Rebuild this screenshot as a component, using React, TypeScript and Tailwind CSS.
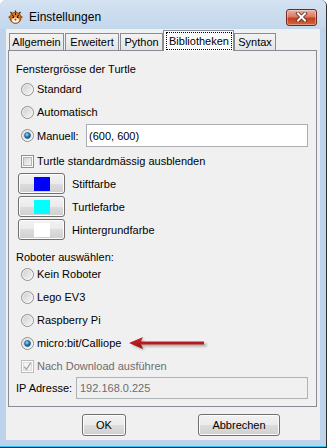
import React from "react";

function Radio({ checked }: { checked?: boolean }) {
  return (
    <svg width="13" height="13" viewBox="0 0 13 13" className="shrink-0">
      <defs>
        <linearGradient id="radFill" x1="0" y1="0" x2="1" y2="1">
          <stop offset="0" stopColor="#cbcbcb" />
          <stop offset="1" stopColor="#fafafa" />
        </linearGradient>
        <radialGradient id="radDot" cx="0.4" cy="0.35" r="0.7">
          <stop offset="0" stopColor="#a6e2ff" />
          <stop offset="0.45" stopColor="#2a8fd4" />
          <stop offset="1" stopColor="#0f3d66" />
        </radialGradient>
      </defs>
      <circle cx="6.5" cy="6.5" r="6" fill="url(#radFill)" stroke="#8f9090" />
      <circle cx="6.5" cy="6.5" r="4.9" fill="none" stroke="#f4f4f4" strokeWidth="0.8" />
      {checked && (
        <circle cx="6.5" cy="6.5" r="3" fill="url(#radDot)" stroke="#1c4e78" strokeWidth="0.6" />
      )}
    </svg>
  );
}

function Check({ checked, disabled }: { checked?: boolean; disabled?: boolean }) {
  return (
    <svg width="13" height="13" viewBox="0 0 13 13" className="shrink-0">
      <defs>
        <linearGradient id="chkFill" x1="0" y1="0" x2="1" y2="1">
          <stop offset="0" stopColor="#cfd2d7" />
          <stop offset="1" stopColor="#f8f8f8" />
        </linearGradient>
      </defs>
      <rect x="0.5" y="0.5" width="12" height="12" fill="#fdfdfd" stroke={disabled ? "#bcbcbc" : "#8e8f8f"} />
      <rect
        x="2.5"
        y="2.5"
        width="8"
        height="8"
        fill={disabled ? "#f4f4f4" : "url(#chkFill)"}
        stroke={disabled ? "#dcdcdc" : "#b2b6bc"}
      />
      {checked && (
        <path
          d="M3.2 6.8 L5.4 9.4 L9.8 2.8"
          fill="none"
          stroke={disabled ? "#a8a8a8" : "#1c4e78"}
          strokeWidth="1.4"
        />
      )}
    </svg>
  );
}

const btn =
  "rounded-[3px] border border-[#707070] bg-[linear-gradient(#f2f2f2_0%,#ebebeb_50%,#dddddd_50%,#cfcfcf_100%)] shadow-[inset_0_0_0_1px_#fcfcfc] flex items-center justify-center";

function ColorRow({ color, label, mt }: { color: string; label: string; mt: string }) {
  return (
    <div className={`flex items-center h-[21px] ${mt}`}>
      <div className={`${btn} ml-[2px] w-[47px] h-[21px]`}>
        <div className="w-[16px] h-[14px]" style={{ backgroundColor: color }} />
      </div>
      <span className="ml-[7px]">{label}</span>
    </div>
  );
}

function RadioRow({ label, checked, mt, children }: { label: string; checked?: boolean; mt: string; children?: React.ReactNode }) {
  return (
    <div className={`flex items-center h-[16px] ${mt}`}>
      <div className="ml-[5px]">
        <Radio checked={checked} />
      </div>
      <span className="ml-[3px] whitespace-nowrap">{label}</span>
      {children}
    </div>
  );
}

function Tab({ label, w, ml }: { label: string; w: string; ml?: string }) {
  return (
    <div
      className={`${w} ${ml ?? ""} h-[17px] border border-b-0 border-[#898c95] bg-[linear-gradient(#f3f3f3,#e4e4e4)] flex items-center justify-center`}
    >
      {label}
    </div>
  );
}

function TigerIcon() {
  return (
    <svg width="15" height="15" viewBox="0 0 15 15">
      <g stroke="#3a1e08" strokeWidth="1.2">
        <path d="M7.5 0.5 L7.5 3" />
        <path d="M2.5 2 L4.3 4" />
        <path d="M12.5 2 L10.7 4" />
        <path d="M0.5 7 L3 7.2" />
        <path d="M14.5 7 L12 7.2" />
      </g>
      <circle cx="7.5" cy="7.8" r="5.6" fill="#e0771c" stroke="#7a3a0a" strokeWidth="0.8" />
      <path d="M4 5 L6 6.5 M11 5 L9 6.5 M7.5 3 L7.5 5" stroke="#2a1606" strokeWidth="1" />
      <ellipse cx="7.5" cy="10" rx="3.4" ry="2.6" fill="#ffffff" />
      <circle cx="5.3" cy="7.3" r="0.9" fill="#000" />
      <circle cx="9.7" cy="7.3" r="0.9" fill="#000" />
      <circle cx="7.5" cy="9.6" r="1.1" fill="#c0281c" />
    </svg>
  );
}

export default function App() {
  return (
    <div className="w-[328px] h-[448px] bg-white overflow-hidden font-['Liberation_Sans',Arial,sans-serif] text-[11px] text-black leading-[16px]">
      <div className="w-[327px] h-[448px] flex flex-col bg-[#bcd3eb] border-r border-[#2d2d2d] rounded-t-[6px] overflow-hidden">
        {/* Title bar */}
        <div className="h-[29px] shrink-0 flex items-center pt-[5px] pl-[8px] pr-[9px] bg-[linear-gradient(#d4e2f1,#c3d7ec)]">
          <TigerIcon />
          <span className="ml-[6px] text-[12px]">Einstellungen</span>
          <div className="ml-auto w-[31px] h-[17px] rounded-[3px] border border-[#6e2a20] bg-[linear-gradient(#eeb0a2_0%,#da7a62_45%,#c4401f_55%,#d4643f_100%)] shadow-[inset_0_0_0_1px_rgba(255,255,255,0.35)] flex items-center justify-center">
            <svg width="13" height="10" viewBox="0 0 13 10">
              <path d="M3 1.5 L10 8.5 M10 1.5 L3 8.5" stroke="#5a2a22" strokeWidth="3.6" strokeLinecap="square" />
              <path d="M3 1.5 L10 8.5 M10 1.5 L3 8.5" stroke="#ffffff" strokeWidth="2" strokeLinecap="square" />
            </svg>
          </div>
        </div>

        {/* Client */}
        <div className="mx-[6px] h-[411px] shrink-0 bg-[#f0f0f0] flex flex-col">
          {/* Tabs */}
          <div className="mt-[1px] h-[20px] pl-[3px] flex items-end relative z-10">
            <Tab label="Allgemein" w="w-[55px]" />
            <Tab label="Erweitert" w="w-[54px]" ml="ml-[1px]" />
            <Tab label="Python" w="w-[43px]" ml="ml-[1px]" />
            <div className="w-[71px] h-[21px] -mb-[1px] border border-b-0 border-[#898c95] bg-[#fcfcfc] pt-[2px] pl-[2px] pr-[1px] pb-[1px] flex">
              <div className="flex-1 border border-dotted border-black flex items-center justify-center -mt-[1px]">
                Bibliotheken
              </div>
            </div>
            <Tab label="Syntax" w="w-[42px]" />
          </div>

          {/* Panel */}
          <div className="ml-[2px] mr-[3px] h-[357px] border border-[#898c95] flex flex-col pl-[7px]">
            <div className="mt-[10px] h-[16px] flex items-center">Fenstergrösse der Turtle</div>
            <RadioRow label="Standard" mt="mt-[4px]" />
            <RadioRow label="Automatisch" mt="mt-[7px]" />
            <div className="mt-[4px] h-[23px] flex items-center">
              <div className="ml-[5px]">
                <Radio checked />
              </div>
              <span className="ml-[3px] w-[49px]">Manuell:</span>
              <div className="w-[222px] h-[23px] border border-[#abadb3] bg-white pl-[2px] flex items-center">
                (600, 600)
              </div>
            </div>
            <div className="mt-[6px] h-[16px] flex items-center">
              <div className="ml-[5px]">
                <Check />
              </div>
              <span className="ml-[3px]">Turtle standardmässig ausblenden</span>
            </div>
            <ColorRow color="#0000ff" label="Stiftfarbe" mt="mt-[4px]" />
            <ColorRow color="#00ffff" label="Turtlefarbe" mt="mt-[2px]" />
            <ColorRow color="#ffffff" label="Hintergrundfarbe" mt="mt-[2px]" />
            <div className="mt-[9px] h-[16px] flex items-center">Roboter auswählen:</div>
            <RadioRow label="Kein Roboter" mt="mt-[1px]" />
            <RadioRow label="Lego EV3" mt="mt-[7px]" />
            <RadioRow label="Raspberry Pi" mt="mt-[7px]" />
            <RadioRow label="micro:bit/Calliope" checked mt="mt-[7px]">
              <svg width="80" height="16" viewBox="0 0 80 16" className="ml-[8px] shrink-0">
                <defs>
                  <filter id="arrSh" x="-10%" y="-50%" width="120%" height="200%">
                    <feGaussianBlur stdDeviation="1" />
                  </filter>
                  <linearGradient id="arrFill" x1="0" y1="0" x2="0" y2="1">
                    <stop offset="0" stopColor="#d2262a" />
                    <stop offset="1" stopColor="#9a0e12" />
                  </linearGradient>
                </defs>
                <path
                  d="M1 8.5 L14 3 L12 7 L76 7 L76 10 L12 10 L14 14 Z"
                  fill="#666"
                  opacity="0.5"
                  filter="url(#arrSh)"
                  transform="translate(1.5,1.5)"
                />
                <path d="M0 8 L14 2 L12 6.5 L75 6.5 L75 9.5 L12 9.5 L14 14 Z" fill="url(#arrFill)" />
              </svg>
            </RadioRow>
            <div className="mt-[7px] h-[16px] flex items-center text-[#6d6d6d]">
              <div className="ml-[5px]">
                <Check checked disabled />
              </div>
              <span className="ml-[3px]">Nach Download ausführen</span>
            </div>
            <div className="mt-[3px] h-[22px] flex items-center">
              <span className="w-[60px]">IP Adresse:</span>
              <div className="w-[232px] h-[22px] border border-[#adb2b5] bg-[#f0f0f0] pl-[3px] flex items-center text-[#6d6d6d]">
                192.168.0.225
              </div>
            </div>
          </div>

          {/* Buttons */}
          <div className="mt-[7px] flex pl-[76px]">
            <div className={`${btn} w-[44px] h-[22px]`}>OK</div>
            <div className={`${btn} ml-[72px] w-[82px] h-[22px]`}>Abbrechen</div>
          </div>
        </div>

        <div className="h-[6px] shrink-0" />
        <div className="h-[1px] shrink-0 bg-[#35c4ee]" />
        <div className="h-[1px] shrink-0 bg-[#222222]" />
      </div>
    </div>
  );
}
